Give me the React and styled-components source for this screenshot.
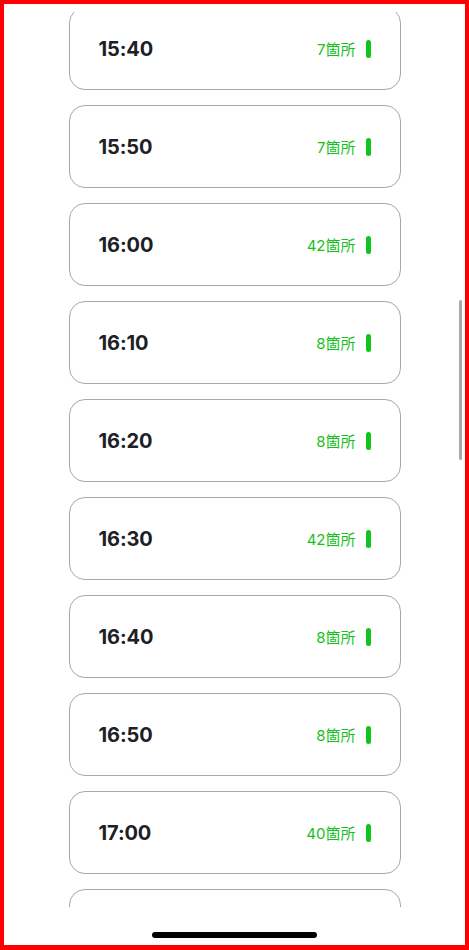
import React from "react";
import styled, { createGlobalStyle } from "styled-components";

const GlobalStyle = createGlobalStyle`
  * {
    box-sizing: border-box;
  }
  html,
  body {
    margin: 0;
    padding: 0;
    background: #ffffff;
    font-family: Inter, "Noto Sans CJK JP", sans-serif;
  }
`;

// 時間ごとの件数
const slots = [
  { time: "15:40", count: 7 },
  { time: "15:50", count: 7 },
  { time: "16:00", count: 42 },
  { time: "16:10", count: 8 },
  { time: "16:20", count: 8 },
  { time: "16:30", count: 42 },
  { time: "16:40", count: 8 },
  { time: "16:50", count: 8 },
  { time: "17:00", count: 40 },
];

export default function App() {
  return (
    <>
      <GlobalStyle />
      <Frame>
        <Viewport>
          <SlotList>
            {slots.map((slot) => (
              <SlotCard key={slot.time}>
                <SlotTime>{slot.time}</SlotTime>
                <SlotInfo>
                  <SlotCount>{slot.count}箇所</SlotCount>
                  <StatusBar />
                </SlotInfo>
              </SlotCard>
            ))}
            {/* 画面外に続くカード */}
            <SlotCard />
          </SlotList>
        </Viewport>
        <Footer>
          <HomeIndicator />
        </Footer>
        <ScrollThumb />
      </Frame>
    </>
  );
}

const Frame = styled.div`
  position: relative;
  width: 469px;
  height: 950px;
  border: 4px solid #ff0000;
  border-bottom-width: 5px;
  background: #ffffff;
  display: flex;
  flex-direction: column;
  overflow: hidden;
`;

const Viewport = styled.div`
  margin-top: 8px;
  height: 895px;
  overflow: hidden;
`;

const SlotList = styled.div`
  display: flex;
  flex-direction: column;
  align-items: center;
  gap: 15px;
  margin-top: -5px;
`;

const SlotCard = styled.div`
  width: 332px;
  height: 83px;
  flex-shrink: 0;
  border: 1px solid #a2a9b5;
  border-radius: 16px;
  display: flex;
  align-items: center;
  justify-content: space-between;
  padding: 0 29px 0 28px;
`;

const SlotTime = styled.div`
  font-family: Inter, sans-serif;
  font-size: 20px;
  font-weight: 700;
  color: #1d2025;
  letter-spacing: -0.1px;
  margin-left: 1px;
`;

const SlotInfo = styled.div`
  display: flex;
  align-items: center;
  gap: 10px;
`;

const SlotCount = styled.span`
  font-family: Inter, "Noto Sans CJK JP", sans-serif;
  font-size: 15px;
  font-weight: 400;
  color: #16c01e;
`;

const StatusBar = styled.span`
  display: block;
  width: 5px;
  height: 18px;
  border-radius: 3px;
  background: #0fc41c;
`;

const Footer = styled.div`
  flex: 1;
  display: flex;
  justify-content: center;
  padding-top: 25px;
`;

const HomeIndicator = styled.div`
  width: 165px;
  height: 6px;
  border-radius: 3px;
  background: #000000;
`;

// スクロールバー
const ScrollThumb = styled.div`
  position: absolute;
  left: 455px;
  top: 296px;
  width: 3px;
  height: 160px;
  border-radius: 2px;
  background: #a9a9a9;
`;
